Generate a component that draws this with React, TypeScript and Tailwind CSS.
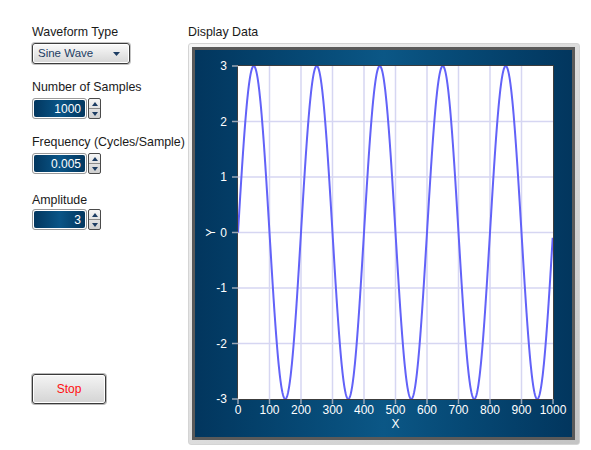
import React from "react";

function Spinner() {
  return (
    <div className="ml-[1px] flex h-[21px] w-[13px] flex-col overflow-hidden rounded-[2px] border border-[#4a4a4a] bg-gradient-to-b from-[#f6f6f6] to-[#cfcfcf]">
      <div className="flex flex-1 items-center justify-center border-b border-[#8a8a8a]">
        <svg width="6" height="4" viewBox="0 0 6 4"><path d="M0 4 L3 0 L6 4 Z" fill="#1d3d63" /></svg>
      </div>
      <div className="flex flex-1 items-center justify-center">
        <svg width="6" height="4" viewBox="0 0 6 4"><path d="M0 0 L3 4 L6 0 Z" fill="#1d3d63" /></svg>
      </div>
    </div>
  );
}

function Numeric({ value }: { value: string }) {
  return (
    <div className="flex items-center">
      <div className="h-[21px] w-[55px] rounded-[3px] border border-[#9a9a9a] bg-[#e4e4e4] p-[1px] shadow-[inset_0_0_0_1px_#ffffff]">
        <div className="flex h-full items-center justify-end rounded-[2px] bg-gradient-to-r from-[#03375f] via-[#0a5587] to-[#03375f] pr-[4px] text-[12px] leading-none text-white">
          {value}
        </div>
      </div>
      <Spinner />
    </div>
  );
}

const PLOT_L = 43;
const PLOT_T = 16;
const PLOT_W = 315;
const PLOT_H = 333;

function Chart() {
  const px = (x: number) => PLOT_L + (x / 1000) * PLOT_W;
  const py = (y: number) => PLOT_T + ((3 - y) / 6) * PLOT_H;
  const pts: string[] = [];
  for (let i = 0; i < 1000; i++) {
    const v = 3 * Math.sin(2 * Math.PI * 0.005 * i);
    pts.push(`${px(i).toFixed(2)},${py(v).toFixed(2)}`);
  }
  const xt = [0, 100, 200, 300, 400, 500, 600, 700, 800, 900, 1000];
  const yt = [3, 2, 1, 0, -1, -2, -3];
  return (
    <svg width="377" height="387" viewBox="0 0 377 387" className="block">
      <rect x={PLOT_L} y={PLOT_T} width={PLOT_W} height={PLOT_H} fill="#ffffff" />
      {xt.slice(1, -1).map((t) => (
        <line key={"gx" + t} x1={px(t)} x2={px(t)} y1={PLOT_T} y2={PLOT_T + PLOT_H} stroke="#d6d6f2" strokeWidth="1.5" />
      ))}
      {yt.slice(1, -1).map((t) => (
        <line key={"gy" + t} x1={PLOT_L} x2={PLOT_L + PLOT_W} y1={py(t)} y2={py(t)} stroke="#d6d6f2" strokeWidth="1.5" />
      ))}
      <polyline points={pts.join(" ")} fill="none" stroke="#6262f8" strokeWidth="2" strokeLinejoin="round" />
      <rect x={PLOT_L - 0.5} y={PLOT_T - 0.5} width={PLOT_W + 1} height={PLOT_H + 1} fill="none" stroke="#3c3c3c" strokeWidth="1" />
      {yt.map((t) => (
        <g key={"yt" + t}>
          <line x1={PLOT_L - 6} x2={PLOT_L} y1={py(t)} y2={py(t)} stroke="#9aa6b4" strokeWidth="1.5" />
          <text x={PLOT_L - 11} y={py(t) + 4} textAnchor="end" fill="#ffffff" fontSize="12" fontFamily="Liberation Sans, Arial, sans-serif">{t}</text>
        </g>
      ))}
      {xt.map((t) => (
        <g key={"xt" + t}>
          <line x1={px(t)} x2={px(t)} y1={PLOT_T + PLOT_H} y2={PLOT_T + PLOT_H + 5} stroke="#9aa6b4" strokeWidth="1.5" />
          <text x={px(t)} y={PLOT_T + PLOT_H + 15} textAnchor="middle" fill="#ffffff" fontSize="12" fontFamily="Liberation Sans, Arial, sans-serif">{t}</text>
        </g>
      ))}
      <text x={PLOT_L + PLOT_W / 2} y={378} textAnchor="middle" fill="#ffffff" fontSize="12" fontFamily="Liberation Sans, Arial, sans-serif">X</text>
      <text x={0} y={0} transform={`translate(20 ${PLOT_T + PLOT_H / 2}) rotate(-90)`} textAnchor="middle" fill="#ffffff" fontSize="12" fontFamily="Liberation Sans, Arial, sans-serif">Y</text>
    </svg>
  );
}

export default function App() {
  return (
    <div className="flex h-[450px] w-[591px] whitespace-nowrap bg-white pl-[32px] pt-[24px] font-['Liberation_Sans',Arial,sans-serif] text-[12.4px] text-[#1a1a1a]">
      <div className="flex w-[156px] shrink-0 flex-col">
        <div className="h-[16px] leading-[16px]">Waveform Type</div>
        <div className="mt-[3px] flex h-[21px] w-[98px] items-center justify-between rounded-[3px] border border-[#3c3c3c] bg-gradient-to-b from-[#fafafa] to-[#d6d6d6] pl-[5px] pr-[9px] text-[11.5px] text-[#1d3d63] shadow-[0_0_0_1px_#c4c4c4,inset_0_0_0_1px_#ffffff]">
          <span className="whitespace-nowrap">Sine Wave</span>
          <svg width="7" height="4" viewBox="0 0 7 4" className="shrink-0"><path d="M0 0 L7 0 L3.5 4 Z" fill="#1d3d63" /></svg>
        </div>
        <div className="mt-[15px] h-[16px] leading-[16px]">Number of Samples</div>
        <div className="mt-[3px]"><Numeric value="1000" /></div>
        <div className="mt-[15px] h-[16px] leading-[16px]">Frequency (Cycles/Sample)</div>
        <div className="mt-[3px]"><Numeric value="0.005" /></div>
        <div className="mt-[18px] h-[16px] leading-[16px]">Amplitude</div>
        <div className="mt-[1px]"><Numeric value="3" /></div>
        <div className="mt-[144px] flex h-[30px] w-[74px] items-center justify-center rounded-[3px] border border-[#3a3a3a] bg-gradient-to-b from-[#f4f4f4] to-[#d4d4d4] text-[12px] text-[#ff1010] shadow-[0_0_0_1px_#b8b8b8,inset_0_0_0_1px_#ffffff]">
          Stop
        </div>
      </div>
      <div className="flex shrink-0 flex-col">
        <div className="h-[16px] leading-[16px]">Display Data</div>
        <div className="mt-[3px] h-[402px] w-[392px] rounded-[3px] border border-[#d4d4d4] bg-gradient-to-br from-[#f6f6f6] to-[#c4c4c4] pb-[4px] pl-[3px] pr-[4px] pt-[3px]">
          <div className="h-[393px] w-[383px] border-[3px] border-[#5a5a5a] bg-gradient-to-r from-[#02365e] via-[#0b5786] to-[#02365e]">
            <Chart />
          </div>
        </div>
      </div>
    </div>
  );
}
